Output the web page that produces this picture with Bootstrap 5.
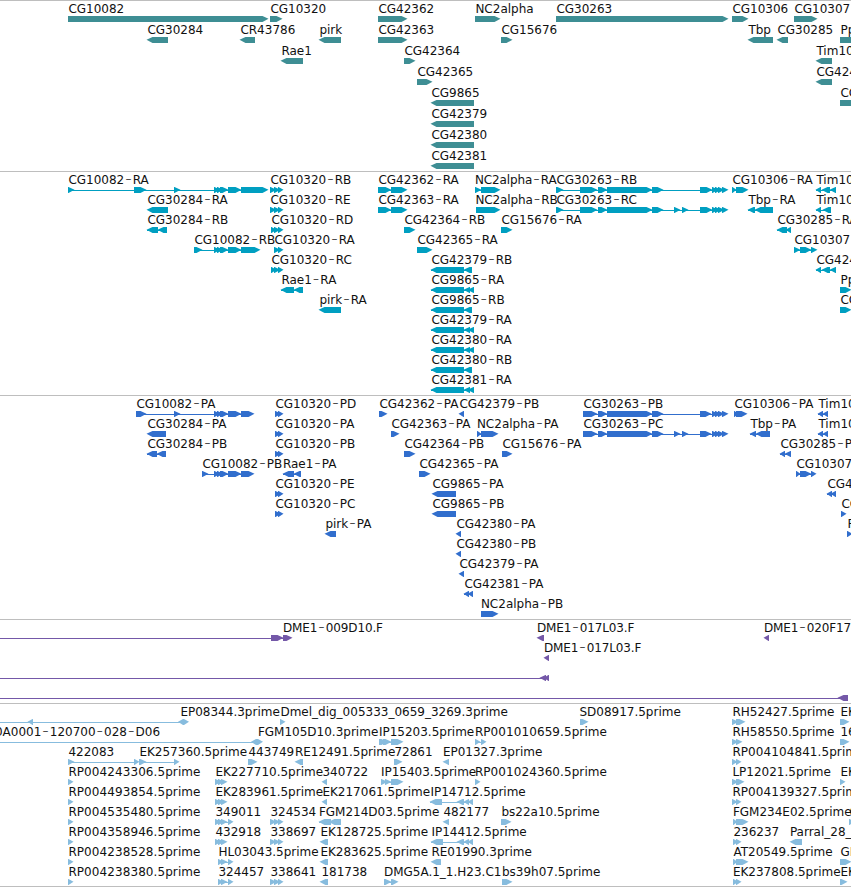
<!DOCTYPE html>
<html lang="en">
<head>
  <meta charset="UTF-8" />
  <meta name="viewport" content="width=device-width, initial-scale=1" />
  <title>Genome tracks</title>
  <link href="https://cdn.jsdelivr.net/npm/bootstrap@5.3.3/dist/css/bootstrap.min.css" rel="stylesheet" />
  <style>
    .browser-view {
      border-bottom: 1px solid #bebebe;
    }
    .track {
      border-top: 1px solid #bebebe;
    }
    .track svg {
      font-family: "DejaVu Sans", sans-serif;
      font-size: 12px;
      fill: currentColor;
    }
    .track text {
      fill: #111;
      white-space: pre;
    }
    .track text.loose {
      letter-spacing: 0.08px;
    }
    .track text.tight {
      letter-spacing: -0.12px;
    }
    .dash {
      font-size: 18px;
      font-weight: 200;
      letter-spacing: 1px;
    }
    .track-gene { color: #3e8e94; height: 171px; }
    .track-mrna { color: #009fc1; height: 224px; }
    .track-cds { color: #316ecd; height: 224px; }
    .track-bac { color: #7458a8; height: 84px; }
    .track-est { color: #87bcde; height: 183px; }
  </style>
</head>
<body class="bg-white overflow-hidden">
  <main class="container-fluid p-0 browser-view d-flex flex-column overflow-hidden">
    <section class="track track-gene w-100 overflow-hidden" data-track="gene"></section>
    <section class="track track-mrna w-100 overflow-hidden" data-track="mrna"></section>
    <section class="track track-cds w-100 overflow-hidden" data-track="cds"></section>
    <section class="track track-bac w-100 overflow-hidden" data-track="bac"></section>
    <section class="track track-est w-100 overflow-hidden" data-track="est"></section>
  </main>

  <script src="https://cdn.jsdelivr.net/npm/bootstrap@5.3.3/dist/js/bootstrap.bundle.min.js"></script>
  <script>
    // a>b forward block, a<b reverse block, a*b pointed at both ends, a-b intron line only
    const ex3 = '214>220 217>223 220>228';
    const tail = '712>718 715>721 718>724 722>728';
    const rb = '556>563 580>597 598>607 607>652 652>663 700>712 ' + tail;
    const rc = '556>563 580>597 598>607 607>652 652>663 674>680 682>688 700>712 ' + tail;
    const pb = '583>597 598>607 607>652 652>663 700>711 ' + tail;
    const pc = '583>597 598>607 607>652 652>663 674>680 682>688 700>711 ' + tail;
    const long3 = '431<464 464<470 468<474';
    const long2 = '431<464 464<472';
    const trio = '270>276 274>280 278>283';
    const trioB = '271>276 274>280 278>283';
    const pair = '275>281 278>283';
    const est3 = '215>221 218>224 221>227';
    const tim = '816<821 822<830 830<836';

    // each row: [label, blocks, label x when it is not the first block's start]
    const tracks = {
      gene: { pitch: 21, rows: [
        [['CG10082', '68>268'], ['CG10320', '270>282'], ['CG42362', '378>407'], ['NC2alpha', '475>500'], ['CG30263', '556>728'], ['CG10306', '732>748'], ['CG10307', '794>817']],
        [['CG30284', '147<168'], ['CR43786', '240<255'], ['pirk', '319<341'], ['CG42363', '378>407'], ['CG15676', '501>512'], ['Tbp', '748<773'], ['CG30285', '777<788'], ['Pp', '840>861']],
        [['Rae1', '281<303'], ['CG42364', '404>415'], ['Tim10', '816<832']],
        [['CG42365', '417>432'], ['CG424', '816<832']],
        [['CG9865', '431<474'], ['CG', '840>861']],
        [['CG42379', '431<474']],
        [['CG42380', '431<474']],
        [['CG42381', '431<474']]
      ] },
      mrna: { pitch: 20, rows: [
        [['CG10082-RA', '68>74 134>146 174>180 ' + ex3 + ' 228>241 241>268'], ['CG10320-RB', trio], ['CG42362-RA', '378>391 391>407'], ['NC2alpha-RA', '475>481 481>500', 474.5], ['CG30263-RB', rb], ['CG10306-RA', '732>736 736>748'], ['Tim10', tim]],
        [['CG30284-RA', '147<168'], ['CG10320-RE', trio], ['CG42363-RA', '378>391 391>407'], ['NC2alpha-RB', '476>500', 475], ['CG30263-RC', rc], ['Tbp-RA', '748<755 755<773'], ['Tim10', '816<821 823<831']],
        [['CG30284-RB', '147<158 158<167'], ['CG10320-RD', trioB], ['CG42364-RB', '404>415'], ['CG15676-RA', '501>512'], ['CG30285-RA', '777<787 786<791']],
        [['CG10082-RB', '194>202 ' + ex3 + ' 228>241 241>260'], ['CG10320-RA', '274>280 278>283'], ['CG42365-RA', '417>432'], ['CG10307', '794>800 800>811 811>817']],
        [['CG10320-RC', trioB], ['CG42379-RB', long2], ['CG424', tim]],
        [['Rae1-RA', '281<294 294<303'], ['CG9865-RA', long3], ['Pp', '840>851']],
        [['pirk-RA', '319<341'], ['CG9865-RB', long2], ['CG', '840>851']],
        [['CG42379-RA', long3]],
        [['CG42380-RA', long3]],
        [['CG42380-RB', long2]],
        [['CG42381-RA', long3]]
      ] },
      cds: { pitch: 20, rows: [
        [['CG10082-PA', '136>146 174>180 ' + ex3 + ' 228>241 241>254'], ['CG10320-PD', pair], ['CG42362-PA', '379>387'], ['CG42379-PB', '459<464'], ['CG30263-PB', pb], ['CG10306-PA', '734>738 736>747'], ['Tim10', '818<823 823<828']],
        [['CG30284-PA', '147<166'], ['CG10320-PA', pair], ['CG42363-PA', '391>399'], ['NC2alpha-PA', '477>481 481>498', 476.5], ['CG30263-PC', pc], ['Tbp-PA', '750<756 756<770'], ['Tim10', '818<823 823<828']],
        [['CG30284-PB', '147<157 157<166'], ['CG10320-PB', pair], ['CG42364-PB', '404>415'], ['CG15676-PA', '502>512'], ['CG30285-P', '780<785 785<791']],
        [['CG10082-PB', '202>208 ' + ex3 + ' 228>241 241>254'], ['Rae1-PA', '283<294 294<301', 282.5], ['CG42365-PA', '419>430'], ['CG10307', '796>800 800>811 811>816']],
        [['CG10320-PE', pair], ['CG9865-PA', '432<456'], ['CG4', '827<832 831<836']],
        [['CG10320-PC', pair], ['CG9865-PB', '432<456'], ['CG', '841>846']],
        [['pirk-PA', '325<336'], ['CG42380-PA', '456<461'], ['P', '847>852']],
        [['CG42380-PB', '456<461']],
        [['CG42379-PA', '459<464']],
        [['CG42381-PA', '464<469 468<473']],
        [['NC2alpha-PB', '481>498', 480.5]]
      ] },
      bac: { pitch: 20, rows: [
        [['DME1-009D10.F', '0-271 271>283 283>292', 282.5], ['DME1-017L03.F', '537<544', 536.5], ['DME1-020F17', '764<769', 763.5]],
        [['DME1-017L03.F', '544<549', 543.5]],
        [['', '0-540 540<546 544<549']],
        [['', '0-838 838<848']]
      ] },
      est: { pitch: 20, rows: [
        [['EP08344.3prime', '0-178 28<33 178*189', 180], ['Dmel_dig_005333_0659_3269.3prime', '280>285'], ['SD08917.5prime', '580>588', 579], ['RH52427.5prime', '732>738 736>745'], ['EK', '840>849']],
        [['0A0001-120700-028-D06', '0-251 251*263', -5.5], ['FGM105D10.3prime', '', 257.5], ['IP15203.5prime', '379>387 383>391 391>403', 378.5], ['RP001010659.5prime', '475>480 481>486', 474.5], ['RH58550.5prime', '732>738 736>742'], ['16', '840>849']],
        [['422083', '68>74 134>139'], ['EK257360.5prime', '139>146 174>179'], ['443749', '248>257'], ['RE12491.5prime', '295<303', 294.5], ['72861', '394>402'], ['EP01327.3prime', '443<449', 442.5], ['RP004104841.5prim', '732>737 736>741']],
        [['RP004243306.5prime', '68>73'], ['EK227710.5prime', est3], ['340722', '322<327'], ['IP15403.5prime', '381>387 385>391 391>403', 380.5], ['RP001024360.5prime', '475>480', 474.5], ['LP12021.5prime', '732>738 736>744'], ['EK', '840>845']],
        [['RP004493854.5prime', '68>73'], ['EK283961.5prime', est3], ['EK217061.5prime', '322<327'], ['IP14712.5prime', '430<442 457<464 464<469 468<473'], ['RP004139327.5prim', '732>737 736>741']],
        [['RP004535480.5prime', '68>73'], ['349011', est3 + ' 228>233'], ['324534', trio], ['FGM214D03.5prime', '319<331 329<341', 318.5], ['482177', '443<449'], ['bs22a10.5prime', '501>511'], ['FGM234E02.5prime', '733>737 736>748', 732.5], ['C', '849>854']],
        [['RP004358946.5prime', '68>73'], ['432918', est3], ['338697', trio], ['EK128725.5prime', '320<328'], ['IP14412.5prime', '431<443 457<464 464<469 468<473'], ['236237', '733>738 736>741'], ['Parral_28_', '790<802', 789.5]],
        [['RP004238528.5prime', '68>73'], ['HL03043.5prime', '218>223 221>227 228>233'], ['EK283625.5prime', '320<328'], ['RE01990.3prime', '431<441'], ['AT20549.5prime', '733>737 736>748'], ['GH', '840>851']],
        [['RP004238380.5prime', '68>73'], ['324457', '218>223 221>227 228>233'], ['338641', trio], ['181738', '320<328', 321], ['DMG5A.1_1.H23.C1', '384>391 391>398', 383.5], ['bs39h07.5prime', '502>512', 501.5], ['EK237808.5prime', '733>738 736>741', 732.5], ['EK', '840>847']]
      ] }
    };

    function blockShape(a, dir, b, y) {
      const tip = Math.min(6, b - a);
      const m = y + 2.7;
      const e = y + 6;
      if (dir === '>') return `<path d="M${a} ${y}H${b - tip + 0.5}L${b + 0.5} ${m}L${b - tip + 0.5} ${e}H${a}z"/>`;
      if (dir === '<') return `<path d="M${b} ${y}H${a + tip - 0.5}L${a - 0.5} ${m}L${a + tip - 0.5} ${e}H${b}z"/>`;
      if (dir === '*') return `<path d="M${a} ${m}L${a + 5} ${y}H${b - 5}L${b} ${m}L${b - 5} ${e}H${a + 5}z"/>`;
      return '';
    }

    function labelClass(label) {
      if (label.startsWith('RP00')) return ' class="loose"';
      if (/^(DME1|NC2alpha-R)/.test(label)) return ' class="tight"';
      return '';
    }

    function renderFeature([label, blocks, labelX], y) {
      const parts = blocks.split(' ').filter(Boolean).map(s => {
        const [, a, dir, b] = s.match(/(\d+)([-<>*])(\d+)/);
        return [+a, dir, +b];
      });
      let out = '';
      if (parts.length > 1) {
        const start = parts[0][0];
        const end = parts[parts.length - 1][2];
        out += `<rect x="${start}" y="${y + 18}" width="${end - start - 2}" height="1"/>`;
      }
      parts.forEach(([a, dir, b]) => { out += blockShape(a, dir, b, y + 15); });
      if (label) {
        const x = (labelX === undefined ? parts[0][0] : labelX) + 0.4;
        out += `<text${labelClass(label)} x="${x}" y="${y + 12}">${label.replace(/-/g, '<tspan class="dash" dx="1">-</tspan>')}</text>`;
      }
      return out;
    }

    document.querySelectorAll('[data-track]').forEach(el => {
      const { pitch, rows } = tracks[el.dataset.track];
      const body = rows.map((row, i) => row.map(f => renderFeature(f, i * pitch)).join('')).join('');
      el.innerHTML = `<svg class="d-block w-100 h-100">${body}</svg>`;
    });
  </script>
</body>
</html>
